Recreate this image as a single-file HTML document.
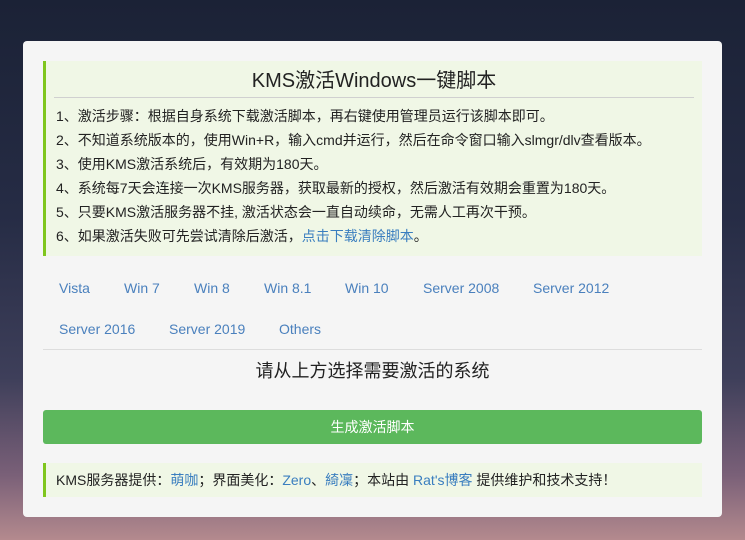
<!DOCTYPE html>
<html><head><meta charset="utf-8"><style>
*{margin:0;padding:0;box-sizing:border-box}
body{width:745px;height:540px;overflow:hidden;font-family:"Liberation Sans","Noto Sans CJK SC",sans-serif;background:linear-gradient(180deg,#1b2236 0%,#262c45 40%,#3e3f5a 70%,#7a6078 88%,#b48a8e 100%);position:relative}
.card{position:absolute;left:23px;top:41px;width:699px;height:476px;background:#f5f5f5;border-radius:4px}
.box{position:absolute;left:20px;width:659px;background:#f0f7e6;border-left:3px solid #7fc61d}
.top{top:20px;height:195px}
.title{text-align:center;font-size:20px;color:#222;height:37px;line-height:40px;margin:0 8px 0 8px;border-bottom:1px solid #d0d0d0}
ol{list-style:none;padding:6px 0 0 10px;font-size:14px;color:#222;line-height:24px}
a{color:#3a7ebf;text-decoration:none}
.tabs{position:absolute;left:20px;top:230px;width:659px;font-size:14px}
.tabs span{position:absolute;color:#4a80bd}
.hr{position:absolute;left:20px;top:308px;width:659px;border-top:1px solid #ddd}
.h{position:absolute;left:20px;width:659px;top:316px;text-align:center;font-size:18px;color:#222}
.btn{position:absolute;left:20px;top:369px;width:659px;height:34px;background:#5cb85c;border-radius:3px;color:#fff;text-align:center;line-height:34px;font-size:14px}
.foot{top:422px;height:34px;line-height:35px;padding-left:10px;font-size:14px;color:#222}
</style></head><body>
<div class="card">
<div class="box top"><div class="title">KMS激活Windows一键脚本</div>
<ol><li>1、激活步骤：根据自身系统下载激活脚本，再右键使用管理员运行该脚本即可。</li>
<li>2、不知道系统版本的，使用Win+R，输入cmd并运行，然后在命令窗口输入slmgr/dlv查看版本。</li>
<li>3、使用KMS激活系统后，有效期为180天。</li>
<li>4、系统每7天会连接一次KMS服务器，获取最新的授权，然后激活有效期会重置为180天。</li>
<li>5、只要KMS激活服务器不挂, 激活状态会一直自动续命，无需人工再次干预。</li>
<li>6、如果激活失败可先尝试清除后激活，<a>点击下载清除脚本</a>。</li></ol></div>
<div class="tabs">
<span style="left:16px;top:9px">Vista</span><span style="left:81px;top:9px">Win 7</span><span style="left:151px;top:9px">Win 8</span><span style="left:221px;top:9px">Win 8.1</span><span style="left:302px;top:9px">Win 10</span><span style="left:380px;top:9px">Server 2008</span><span style="left:490px;top:9px">Server 2012</span>
<span style="left:16px;top:50px">Server 2016</span><span style="left:126px;top:50px">Server 2019</span><span style="left:236px;top:50px">Others</span></div>
<div class="hr"></div>
<div class="h">请从上方选择需要激活的系统</div>
<div class="btn">生成激活脚本</div>
<div class="box foot">KMS服务器提供：<a>萌咖</a>；界面美化：<a>Zero</a>、<a>綺凜</a>；本站由 <a>Rat's博客</a> 提供维护和技术支持！</div>
</div>
</body></html>
